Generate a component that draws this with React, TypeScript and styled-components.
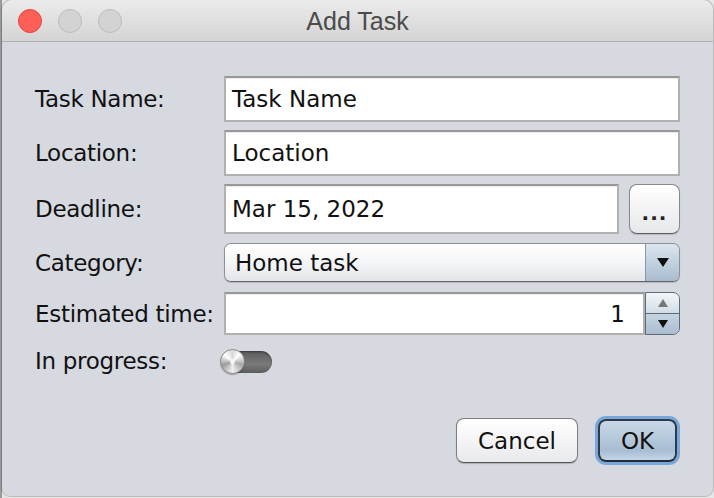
import React from "react";
import styled, { createGlobalStyle } from "styled-components";

const Global = createGlobalStyle`
  html, body { margin: 0; padding: 0; }
  body {
    width: 714px; height: 498px; overflow: hidden;
    background: linear-gradient(to right, #9a9a9a 0 2px, #e6e6e6 2px);
    font-family: "DejaVu Sans", "Liberation Sans", sans-serif;
  }
`;

const Window = styled.div`
  box-sizing: border-box;
  margin-left: 2px;
  width: 711px;
  height: 496px;
  background: #d6d9e0;
  border-radius: 10px 10px 8px 8px;
  overflow: hidden;
  display: flex;
  flex-direction: column;
  box-shadow: 0 0 0 1px rgba(0,0,0,0.18);
`;

const TitleBar = styled.div`
  height: 41px;
  flex: none;
  display: grid;
  grid-template-columns: 1fr auto 1fr;
  align-items: center;
  background: linear-gradient(#ebebeb, #d4d4d4);
  border-bottom: 1px solid #b0b0b0;
`;

const Lights = styled.div`
  display: flex;
  gap: 16px;
  padding-left: 16px;
`;

const Light = styled.span<{ $red?: boolean }>`
  box-sizing: border-box;
  width: 24px;
  height: 24px;
  border-radius: 50%;
  background: ${(p) => (p.$red ? "#fe5f57" : "#d3d3d3")};
  border: 1px solid ${(p) => (p.$red ? "#e2463f" : "#bcbcbc")};
`;

const Title = styled.div`
  font-family: "Liberation Sans", Arial, sans-serif;
  font-size: 25px;
  color: #4b4b4b;
  padding-top: 1px;
`;

const Content = styled.div`
  flex: 1;
  display: flex;
  flex-direction: column;
  padding: 34px 33px 33px 31px;
`;

const Form = styled.div`
  display: flex;
  flex-direction: column;
`;

const Row = styled.div<{ $h: number; $mt?: number }>`
  display: grid;
  grid-template-columns: 191px 1fr;
  align-items: center;
  height: ${(p) => p.$h}px;
  margin-top: ${(p) => p.$mt ?? 0}px;
`;

const Label = styled.div`
  font-size: 23px;
  letter-spacing: -0.3px;
  color: #111;
  padding-left: 2px;
  white-space: nowrap;
`;

const Field = styled.div<{ $right?: boolean }>`
  box-sizing: border-box;
  height: 100%;
  background: #fff;
  border: 2px solid #b1b1b1;
  border-top-color: #989898;
  box-shadow: inset 0 1px 1px rgba(0,0,0,0.08);
  display: flex;
  align-items: center;
  justify-content: ${(p) => (p.$right ? "flex-end" : "flex-start")};
  padding: 0 6px;
  font-size: 23px;
  color: #111;
  white-space: nowrap;
  flex: 1;
`;

const DateWrap = styled.div`
  display: flex;
  gap: 10px;
  height: 100%;
`;

const SmallButton = styled.div`
  box-sizing: border-box;
  width: 51px;
  height: 100%;
  border-radius: 8px;
  border: 1px solid #888;
  border-bottom-color: #5e5e5e;
  background: linear-gradient(#ffffff, #f3f3f5 50%, #e6e7ea);
  box-shadow: 0 1px 1px rgba(0,0,0,0.15);
  display: flex;
  align-items: center;
  justify-content: center;
  font-size: 20px;
  font-weight: bold;
  letter-spacing: 1px;
  color: #222;
  padding-top: 8px;
`;

const Combo = styled.div`
  box-sizing: border-box;
  height: 100%;
  display: flex;
  border-radius: 7px;
  border: 1px solid #8b9097;
  border-bottom-color: #5f646b;
  overflow: hidden;
  box-shadow: 0 1px 1px rgba(0,0,0,0.15);
`;

const ComboText = styled.div`
  flex: 1;
  display: flex;
  align-items: center;
  padding-left: 10px;
  font-size: 23px;
  color: #111;
  background: linear-gradient(#ffffff, #f4f5f7 50%, #e3e5e9);
`;

const ArrowBox = styled.div`
  width: 33px;
  border-left: 1px solid #8a96a3;
  background: linear-gradient(#dce5ee, #c2d1df 50%, #a8bccf);
  display: flex;
  align-items: center;
  justify-content: center;
`;

const Spinner = styled.div`
  display: flex;
  height: 100%;
`;

const SpinArrows = styled.div`
  box-sizing: border-box;
  width: 35px;
  display: flex;
  flex-direction: column;
  border: 1px solid #5f6a76;
  border-radius: 0 7px 7px 0;
  overflow: hidden;
`;

const SpinHalf = styled.div<{ $bottom?: boolean }>`
  flex: 1;
  display: flex;
  align-items: center;
  justify-content: center;
  background: ${(p) =>
    p.$bottom
      ? "linear-gradient(#c6d4e1, #a9bdd0)"
      : "linear-gradient(#f3f6f9, #d2dce6)"};
  border-top: ${(p) => (p.$bottom ? "1px solid #5f6a76" : "none")};
`;

const Tri = styled.span<{ $up?: boolean; $c: string; $w: number }>`
  width: 0;
  height: 0;
  border-left: ${(p) => p.$w / 2}px solid transparent;
  border-right: ${(p) => p.$w / 2}px solid transparent;
  ${(p) =>
    p.$up
      ? `border-bottom: ${p.$w * 0.8}px solid ${p.$c};`
      : `border-top: ${p.$w * 0.8}px solid ${p.$c};`}
`;

const Toggle = styled.div`
  position: relative;
  width: 52px;
  height: 25px;
  margin-left: -4px;
`;

const Track = styled.div`
  position: absolute;
  left: 6px;
  right: 0;
  top: 2px;
  bottom: 1px;
  border-radius: 12px;
  background: linear-gradient(#5a5a5a, #7a7a7a 60%, #5c5c5c);
  box-shadow: inset 0 1px 2px rgba(0,0,0,0.4);
`;

const Knob = styled.div`
  position: absolute;
  left: 0;
  top: 0;
  width: 25px;
  height: 25px;
  border-radius: 50%;
  box-sizing: border-box;
  border: 1px solid #8a8a8a;
  background:
    radial-gradient(circle at 50% 50%, #f4f4f4 0 2px, transparent 3px),
    conic-gradient(#d8d8d8, #ffffff 45deg, #a8a8a8 110deg, #f0f0f0 180deg, #9c9c9c 250deg, #ffffff 310deg, #d8d8d8);
  box-shadow: 0 1px 1px rgba(0,0,0,0.3);
`;

const Buttons = styled.div`
  margin-top: auto;
  display: flex;
  justify-content: flex-end;
  align-items: center;
  gap: 20px;
`;

const Button = styled.div<{ $primary?: boolean }>`
  box-sizing: border-box;
  height: ${(p) => (p.$primary ? 43 : 45)}px;
  width: ${(p) => (p.$primary ? 79 : 122)}px;
  border-radius: 8px;
  display: flex;
  align-items: center;
  justify-content: center;
  font-size: 23px;
  color: #111;
  border: ${(p) => (p.$primary ? "2px solid #2b3a4c" : "1px solid #7d7d7d")};
  border-bottom-color: ${(p) => (p.$primary ? "#1f2b38" : "#555")};
  background: ${(p) =>
    p.$primary
      ? "linear-gradient(#c9d8e7, #b3c7da 50%, #a6bdd3 75%, #c4d5e6)"
      : "linear-gradient(#ffffff, #f4f4f6 50%, #e8e9ec)"};
  box-shadow: ${(p) =>
    p.$primary ? "0 0 0 3px #7aa7d9" : "0 1px 1px rgba(0,0,0,0.2)"};
  margin-right: ${(p) => (p.$primary ? 3 : 0)}px;
`;

export default function App() {
  return (
    <>
      <Global />
      <Window>
        <TitleBar>
          <Lights>
            <Light $red />
            <Light />
            <Light />
          </Lights>
          <Title>Add Task</Title>
          <div />
        </TitleBar>
        <Content>
          <Form>
            <Row $h={46}>
              <Label>Task Name:</Label>
              <Field>Task Name</Field>
            </Row>
            <Row $h={46} $mt={8}>
              <Label>Location:</Label>
              <Field>Location</Field>
            </Row>
            <Row $h={50} $mt={8}>
              <Label>Deadline:</Label>
              <DateWrap>
                <Field>Mar 15, 2022</Field>
                <SmallButton>...</SmallButton>
              </DateWrap>
            </Row>
            <Row $h={39} $mt={9}>
              <Label>Category:</Label>
              <Combo>
                <ComboText>Home task</ComboText>
                <ArrowBox>
                  <Tri $c="#111" $w={12} />
                </ArrowBox>
              </Combo>
            </Row>
            <Row $h={43} $mt={10}>
              <Label>Estimated time:</Label>
              <Spinner>
                <Field $right style={{ paddingRight: 18 }}>1</Field>
                <SpinArrows>
                  <SpinHalf>
                    <Tri $up $c="#777" $w={11} />
                  </SpinHalf>
                  <SpinHalf $bottom>
                    <Tri $c="#111" $w={11} />
                  </SpinHalf>
                </SpinArrows>
              </Spinner>
            </Row>
            <Row $h={25} $mt={13}>
              <Label>In progress:</Label>
              <Toggle>
                <Track />
                <Knob />
              </Toggle>
            </Row>
          </Form>
          <Buttons>
            <Button>Cancel</Button>
            <Button $primary>OK</Button>
          </Buttons>
        </Content>
      </Window>
    </>
  );
}
